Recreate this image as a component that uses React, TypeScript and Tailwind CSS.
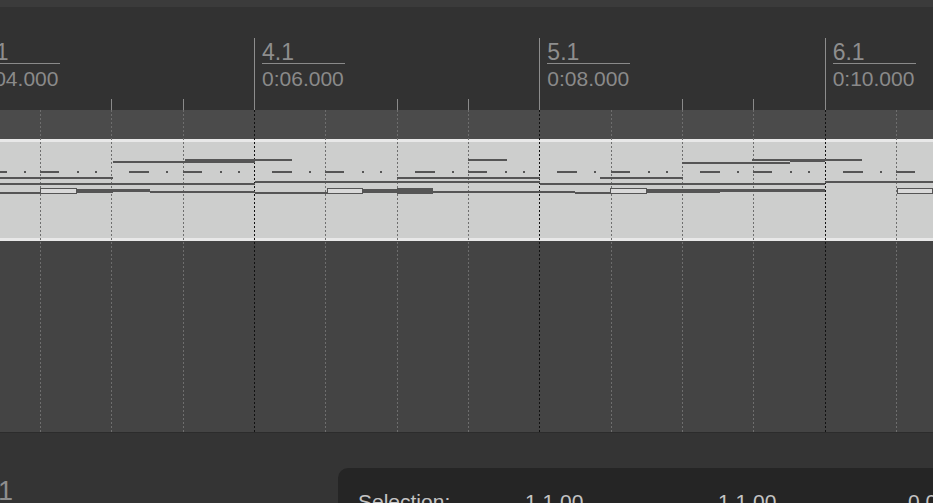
const BAR = 285.33;
const START = 254 - BAR; // x of bar 3.1

const bars = [3, 4, 5, 6].map((n, i) => ({ n, x: START + i * BAR }));
const beats = Array.from({ length: 16 }, (_, i) => START + (i * BAR) / 4).filter(
  (x) => x > -2 && x < 940
);

// [x1, x2, y, h, kind]
type Note = [number, number, number, number, "fill" | "box"];

const notes: Note[] = [
  // upper voice
  [113, 255, 161, 2, "fill"],
  [185, 292, 159, 2, "fill"],
  [468, 507, 159, 2, "fill"],
  [682, 790, 162, 2, "fill"],
  [752, 862, 159, 2, "fill"],
  [790, 825, 159, 3, "fill"],
  // row at 177
  [0, 113, 177, 2, "fill"],
  [397, 540, 177, 2, "fill"],
  [600, 683, 177, 2, "fill"],
  // long notes per bar
  [0, 255, 183, 2, "fill"],
  [255, 540, 181, 2, "fill"],
  [540, 825, 183, 2, "fill"],
  [825, 933, 181, 2, "fill"],
  // low voice
  [0, 40, 192, 2, "fill"],
  [40, 77, 188, 6, "box"],
  [77, 113, 189, 4, "fill"],
  [113, 150, 189, 3, "fill"],
  [150, 255, 191, 2, "fill"],
  [255, 327, 192, 2, "fill"],
  [327, 363, 188, 6, "box"],
  [363, 397, 189, 4, "fill"],
  [397, 433, 188, 6, "fill"],
  [433, 575, 191, 2, "fill"],
  [575, 610, 192, 2, "fill"],
  [610, 647, 188, 6, "box"],
  [647, 720, 189, 4, "fill"],
  [720, 825, 189, 3, "fill"],
  [897, 933, 188, 6, "box"],
];

// the dash/dot pattern on the hi-hat row
function dashRow(): Note[] {
  const out: Note[] = [];
  for (let i = 0; i < 16; i++) {
    const b = START + (i * BAR) / 4;
    if (i % 2 === 0) {
      out.push([b + 18, b + 38, 171, 2, "fill"]);
      out.push([b + 55, b + 57, 171, 2, "fill"]);
    } else {
      out.push([b, b + 19, 171, 2, "fill"]);
      out.push([b + 37, b + 39, 171, 2, "fill"]);
      out.push([b + 55, b + 57, 171, 2, "fill"]);
    }
  }
  return out;
}

const allNotes = [...notes, ...dashRow()];

export default function App() {
  return (
    <div className="relative w-[933px] h-[503px] overflow-hidden bg-[#333333] flex flex-col font-['Liberation_Sans',Arial,sans-serif]">
      <div className="h-[7px] bg-[#3b3b3b] shrink-0" />

      {/* ruler */}
      <div className="relative h-[103px] bg-[#323232] shrink-0">
        {bars.map((b) => (
          <div key={b.n}>
            <div className="absolute top-[31px] bottom-0 w-px bg-[#8d8d8d]" style={{ left: b.x }} />
            <div
              className="absolute top-[34px] leading-none text-[23px] text-[#8e8e8e]"
              style={{ left: b.x + 8 }}
            >
              {b.n}.1
            </div>
            <div className="absolute top-[56px] h-px w-[83px] bg-[#8a8a8a]" style={{ left: b.x + 8 }} />
            <div
              className="absolute top-[61px] leading-none text-[21px] text-[#8a8a8a]"
              style={{ left: b.x + 8 }}
            >
              0:{String((b.n - 1) * 2).padStart(2, "0")}.000
            </div>
          </div>
        ))}
        {beats
          .filter((_, i) => i % 4 !== 0)
          .map((x) => (
            <div key={x} className="absolute bottom-0 h-[11px] w-px bg-[#8a8a8a]" style={{ left: x }} />
          ))}
      </div>

      {/* track */}
      <div className="relative h-[322px] shrink-0 bg-[#444444] flex flex-col">
        <div className="h-[29px] bg-[#4b4b4b]" />
        <div className="h-[102px] bg-[#cdcecd] border-y-[3px] border-[#e8e8e8]" />
        <div className="flex-1" />

        {beats.map((x) => {
          const isBar = Math.round(((x - START) / BAR) * 4) % 4 === 0;
          return (
            <div
              key={x}
              className={
                isBar
                  ? "absolute z-[1] top-0 bottom-0 w-px bg-[repeating-linear-gradient(to_bottom,#111_0_2px,transparent_2px_4px)]"
                  : "absolute z-[1] top-0 bottom-0 w-px bg-[repeating-linear-gradient(to_bottom,#6e6e6e_0_2px,transparent_2px_4px)]"
              }
              style={{ left: x }}
            />
          );
        })}

        {allNotes.map(([x1, x2, y, h, kind], i) => (
          <div
            key={i}
            className={
              kind === "box"
                ? "absolute z-[2] border border-[#555] bg-[#d9d9d9]"
                : "absolute z-[2] bg-[#555555]"
            }
            style={{ left: x1, width: x2 - x1, top: y - 110, height: h }}
          />
        ))}
      </div>

      {/* bottom */}
      <div className="relative flex-1 bg-[#343434] border-t border-[#2c2c2c]">
        <div className="absolute left-[-2px] top-[45px] leading-none text-[27px] text-[#8e8e8e]">1</div>
        <div className="absolute left-[338px] top-[35px] right-0 bottom-0 rounded-tl-[10px] bg-[#252525] flex items-start pt-[23px] pl-[20px] text-[21px] leading-none text-[#c4c4c4] whitespace-nowrap">
          <span className="w-[167px] shrink-0">Selection:</span>
          <span className="w-[193px] shrink-0">1.1.00</span>
          <span className="w-[190px] shrink-0">1.1.00</span>
          <span className="shrink-0">0.0.00</span>
        </div>
      </div>
    </div>
  );
}
